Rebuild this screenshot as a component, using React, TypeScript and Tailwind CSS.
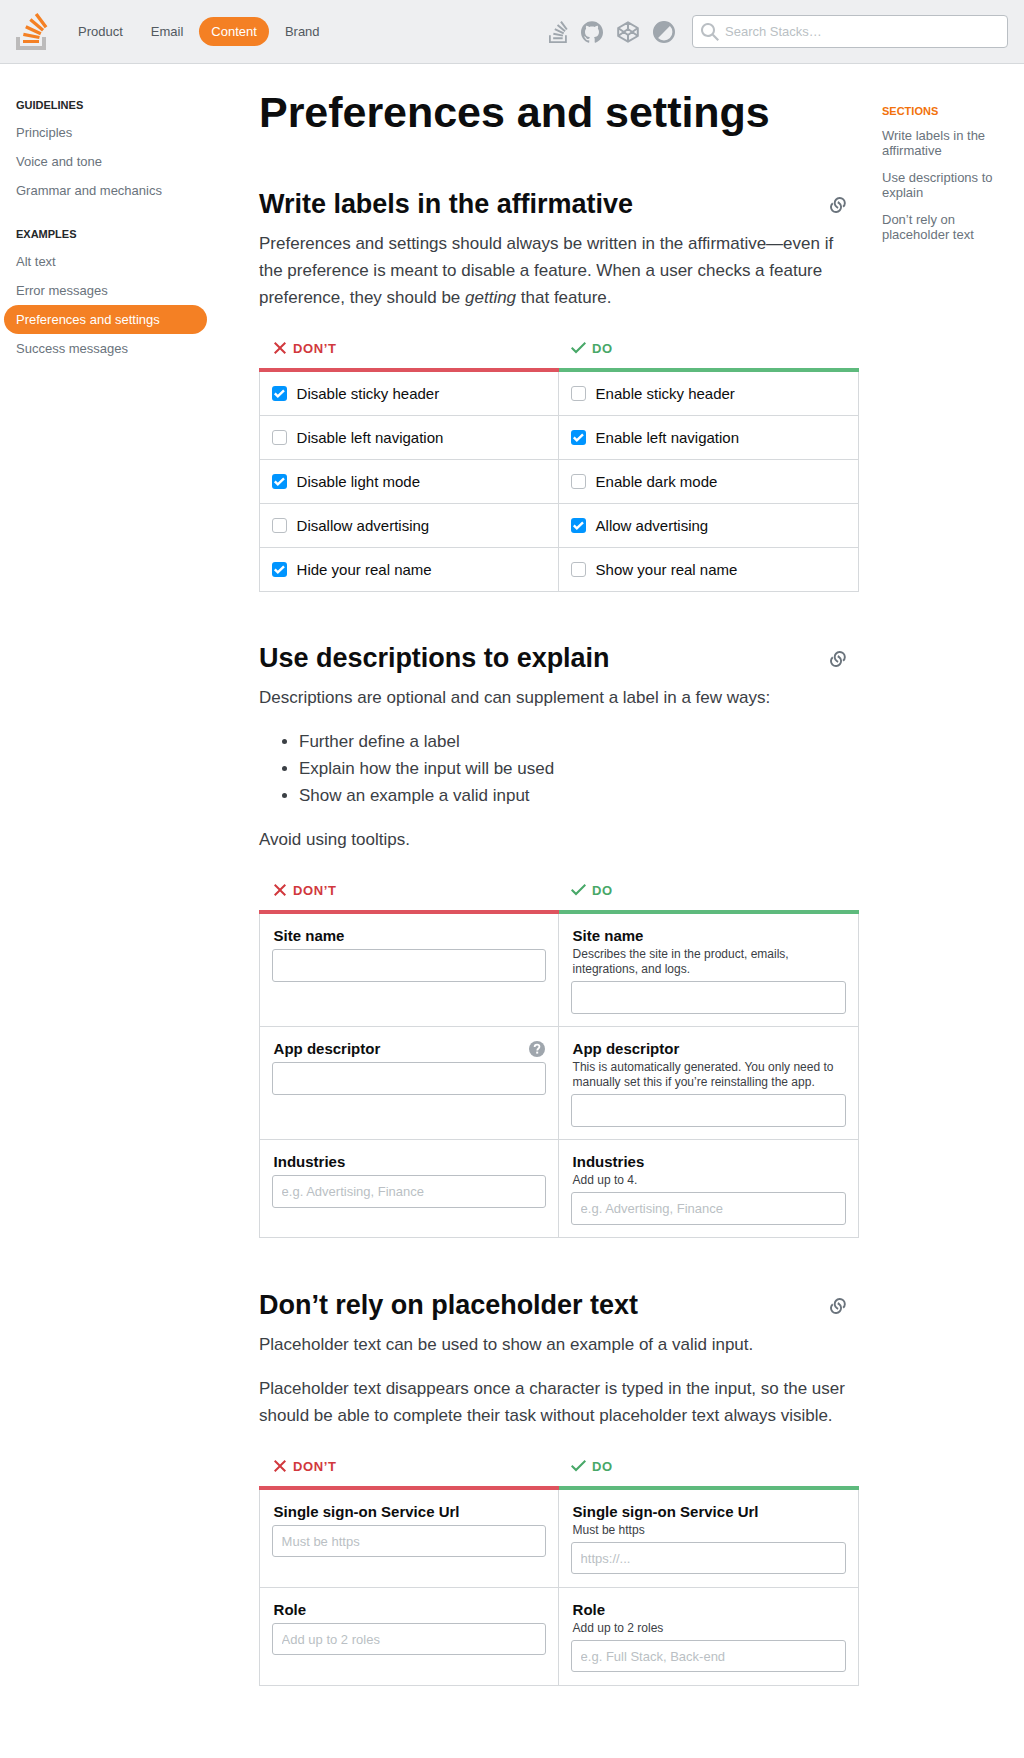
import React from "react";
import { SiGithub } from "react-icons/si";

const navLinks = ["Product", "Email", "Content", "Brand"];
const sideGroups = [
  { title: "Guidelines", items: ["Principles", "Voice and tone", "Grammar and mechanics"] },
  { title: "Examples", items: ["Alt text", "Error messages", "Preferences and settings", "Success messages"] },
];

function LinkIcon() {
  return (
    <svg width="18" height="18" viewBox="0 0 18 18" fill="currentColor">
      <path d="M7.22 11.83a6 6 0 0 0 1.62.85l.61-1.8a4.1 4.1 0 1 1 4.04-.8l1.26 1.42a6 6 0 1 0-7.53.33Zm3.43-5.6a6 6 0 0 0-1.6-.87L8.4 7.15a4.1 4.1 0 1 1-4.05.73L3.12 6.43a6 6 0 1 0 7.53-.2Z" />
    </svg>
  );
}

function CrossIcon() {
  return (
    <svg width="18" height="18" viewBox="0 0 18 18" fill="currentColor">
      <path d="M15 4.41 13.59 3 9 7.59 4.41 3 3 4.41 7.59 9 3 13.59 4.41 15 9 10.41 13.59 15 15 13.59 10.41 9 15 4.41Z" />
    </svg>
  );
}

function CheckIcon() {
  return (
    <svg width="18" height="18" viewBox="0 0 18 18" fill="currentColor">
      <path d="M16 4.41 14.59 3 6 11.59 2.41 8 1 9.41l5 5 10-10Z" />
    </svg>
  );
}

function Compare({ children }: { children: React.ReactNode }) {
  return (
    <div className="w-[600px] text-[15px] leading-[20px] text-[#0c0d0e]">
      <div className="grid grid-cols-2 text-[13px] font-bold leading-[17px] tracking-[0.65px]">
        <div className="flex h-[44px] items-center gap-1 border-b-4 border-[#de535e] pl-3 text-[#d1383d]">
          <CrossIcon />
          <span>DON’T</span>
        </div>
        <div className="flex h-[44px] items-center gap-1 border-b-4 border-[#5eba7d] pl-[11px] text-[#48a868]">
          <CheckIcon />
          <span>DO</span>
        </div>
      </div>
      {children}
    </div>
  );
}

function Row({ left, right }: { left: React.ReactNode; right: React.ReactNode }) {
  return (
    <div className="grid grid-cols-2 border-b border-[#d6d9dc]">
      <div className="border-x border-[#d6d9dc] p-3">{left}</div>
      <div className="border-r border-[#d6d9dc] p-3">{right}</div>
    </div>
  );
}

function Check({ label, on }: { label: string; on: boolean }) {
  return (
    <div className="flex h-[19px] items-center">
      {on ? (
        <span className="size-[15px] rounded-[3px] bg-[#0095ff] text-white">
          <svg width="15" height="15" viewBox="0 0 15 15" fill="none" stroke="currentColor" strokeWidth="2.4">
            <path d="M2.8 7.4 5.8 10.4 12 4.3" />
          </svg>
        </span>
      ) : (
        <span className="size-[15px] rounded-[3px] border border-[#babfc4] bg-white" />
      )}
      <span className="ml-[9.6px]">{label}</span>
    </div>
  );
}

type FieldProps = { label: string; desc?: string; placeholder?: string; help?: boolean; compact?: boolean };

function Field({ label, desc, placeholder, help, compact }: FieldProps) {
  return (
    <div>
      <div className="flex h-[20px] items-center justify-between px-[1.6px] font-bold">
        <span>{label}</span>
        {help && (
          <svg className="-mr-[2px]" width="18" height="18" viewBox="0 0 18 18">
            <circle cx="9" cy="9" r="8" fill="#9fa6ad" />
            <path
              d="M6.6 7.1C6.6 5.5 7.6 4.7 9.05 4.7c1.4 0 2.4.8 2.4 2.1 0 1.7-2.2 1.7-2.2 3.6"
              fill="none"
              stroke="#fff"
              strokeWidth="1.8"
            />
            <path d="M8.2 11.6h2v2h-2z" fill="#fff" />
          </svg>
        )}
      </div>
      {desc && <p className="mt-[1px] mb-[4px] px-[1.6px] text-[12px] leading-[15px] text-[#3b4045]">{desc}</p>}
      <input
        className={
          (desc ? "" : "mt-[3px] ") +
          (compact ? "mb-[1px] h-[32px] " : "h-[33px] ") +
          "block w-full rounded-[3px] border border-[#babfc4] bg-white px-[8.6px] text-[13px] outline-none placeholder:text-[#babfc4]"
        }
        placeholder={placeholder}
      />
    </div>
  );
}

function Heading({ children }: { children: React.ReactNode }) {
  return (
    <div className="flex h-[35px] w-[600px] items-center justify-between pr-3">
      <h2 className="text-[27px] font-bold leading-[35px] tracking-[-0.02px] text-[#0c0d0e]">{children}</h2>
      <span className="pt-[1px] text-[#6a737c]">
        <LinkIcon />
      </span>
    </div>
  );
}

export default function App() {
  return (
    <div className="h-[1758px] w-[1024px] overflow-hidden bg-white font-['Liberation_Sans',Arial,sans-serif] text-[13px] leading-[17px] text-[#3b4045]">
      <header className="flex h-[64px] items-center border-b border-[#d6d9dc] bg-[#eeeff1] pr-4 pl-4">
        <svg className="mr-[18px]" width="32" height="37" viewBox="0 0 32 37">
          <path d="M26 33v-9h4v13H0V24h4v9h22Z" fill="#BCBBBB" />
          <path
            d="m21.5 0-2.7 2 9.9 13.3 2.7-2L21.5 0ZM26 18.4 13.3 7.8l2.1-2.5 12.7 10.6-2.1 2.5ZM9.1 15.2l15 7 1.4-3-15-7-1.4 3Zm14 10.79.68-2.95-16.1-3.35L7 23l16.1 2.99ZM23 30H7v-3h16v3Z"
            fill="#F48024"
          />
        </svg>
        <nav className="flex gap-1">
          {navLinks.map((l) => (
            <a
              key={l}
              className={
                l === "Content"
                  ? "rounded-full bg-[#f48024] px-3 py-[6px] text-white"
                  : "px-3 py-[6px] text-[#525960]"
              }
            >
              {l}
            </a>
          ))}
        </nav>
        <div className="ml-auto flex items-center gap-[14px] text-[#9fa6ad]">
          <svg className="-mr-[1px]" width="19" height="22" viewBox="0 0 32 37" preserveAspectRatio="none" fill="currentColor">
            <path d="M27 34v-10h3v13H0V24h3v10h24Z" />
            <path d="m21.5 0-2.7 2 9.9 13.3 2.7-2L21.5 0ZM26 18.4 13.3 7.8l2.1-2.5 12.7 10.6-2.1 2.5ZM9.1 15.2l15 7 1.4-3-15-7-1.4 3Zm14 10.79.68-2.95-16.1-3.35L7 23l16.1 2.99ZM23 30.5H7v-3h16v3Z" />
          </svg>
          <SiGithub size={22} />
          <svg width="22" height="22" viewBox="0 0 22 22" fill="none" stroke="currentColor" strokeWidth="2" strokeLinejoin="round">
            <path d="M11 1.3 20.8 7v8L11 20.7 1.2 15V7ZM11 1.3V8M11 14v6.7M1.2 7 11 14l9.8-7M1.2 15 11 8l9.8 7" />
          </svg>
          <svg width="22" height="22" viewBox="0 0 22 22">
            <circle cx="11" cy="11" r="9.7" fill="none" stroke="currentColor" strokeWidth="2.6" />
            <path d="M18.4 3.6A10.4 10.4 0 1 0 3.6 18.4Z" fill="currentColor" />
          </svg>
        </div>
        <div className="ml-[17px] flex h-[33px] w-[316px] items-center rounded-[4px] border border-[#babfc4] bg-white pl-2">
          <svg width="18" height="18" viewBox="0 0 18 18" fill="#babfc4">
            <path d="m18 16.5-5.14-5.18h-.35a7 7 0 1 0-1.19 1.19v.35L16.5 18l1.5-1.5ZM12 7A5 5 0 1 1 2 7a5 5 0 0 1 10 0Z" />
          </svg>
          <span className="ml-[6px] text-[#babfc4]">Search Stacks…</span>
        </div>
      </header>

      <div className="flex">
        <aside className="w-[259px] shrink-0 pt-[32px] text-[#6a737c]">
          {sideGroups.map((g) => (
            <div key={g.title} className="mb-[20px] w-[207px] pl-1">
              <h3 className="h-[22px] px-3 text-[11px] font-bold uppercase leading-[18px] text-[#242729]">{g.title}</h3>
              {g.items.map((i) => (
                <a
                  key={i}
                  className={
                    i === "Preferences and settings"
                      ? "block rounded-full bg-[#f48024] px-3 py-[6px] text-white"
                      : "block px-3 py-[6px]"
                  }
                >
                  {i}
                </a>
              ))}
            </div>
          ))}
        </aside>

        <main className="w-[600px] shrink-0 text-[17px] leading-[27px]">
          <h1 className="mt-[20px] h-[56px] text-[43px] font-bold leading-[56px] tracking-[-0.03px] text-[#0c0d0e]">
            Preferences and settings
          </h1>

          <div className="mt-[47px]">
            <Heading>Write labels in the affirmative</Heading>
            <p className="mt-[8px] mb-[17px] w-[590px]">
              Preferences and settings should always be written in the affirmative—even if the preference is meant to
              disable a feature. When a user checks a feature preference, they should be <em>getting</em> that feature.
            </p>
            <Compare>
              <Row left={<Check label="Disable sticky header" on />} right={<Check label="Enable sticky header" on={false} />} />
              <Row left={<Check label="Disable left navigation" on={false} />} right={<Check label="Enable left navigation" on />} />
              <Row left={<Check label="Disable light mode" on />} right={<Check label="Enable dark mode" on={false} />} />
              <Row left={<Check label="Disallow advertising" on={false} />} right={<Check label="Allow advertising" on />} />
              <Row left={<Check label="Hide your real name" on />} right={<Check label="Show your real name" on={false} />} />
            </Compare>
          </div>

          <div className="mt-[49px]">
            <Heading>Use descriptions to explain</Heading>
            <p className="mt-[8px]">Descriptions are optional and can supplement a label in a few ways:</p>
            <ul className="mt-[17px] list-disc pl-[40px]">
              <li>Further define a label</li>
              <li>Explain how the input will be used</li>
              <li>Show an example a valid input</li>
            </ul>
            <p className="mt-[17px] mb-[17px]">Avoid using tooltips.</p>
            <Compare>
              <Row
                left={<Field label="Site name" />}
                right={<Field label="Site name" desc="Describes the site in the product, emails, integrations, and logs." />}
              />
              <Row
                left={<Field label="App descriptor" help />}
                right={
                  <Field
                    label="App descriptor"
                    desc="This is automatically generated. You only need to manually set this if you’re reinstalling the app."
                  />
                }
              />
              <Row
                left={<Field label="Industries" placeholder="e.g. Advertising, Finance" />}
                right={<Field label="Industries" desc="Add up to 4." placeholder="e.g. Advertising, Finance" />}
              />
            </Compare>
          </div>

          <div className="mt-[50px]">
            <Heading>Don’t rely on placeholder text</Heading>
            <p className="mt-[8px]">Placeholder text can be used to show an example of a valid input.</p>
            <p className="mt-[17px] mb-[17px]">
              Placeholder text disappears once a character is typed in the input, so the user should be able to complete
              their task without placeholder text always visible.
            </p>
            <Compare>
              <Row
                left={<Field compact label="Single sign-on Service Url" placeholder="Must be https" />}
                right={<Field compact label="Single sign-on Service Url" desc="Must be https" placeholder="https://..." />}
              />
              <Row
                left={<Field compact label="Role" placeholder="Add up to 2 roles" />}
                right={<Field compact label="Role" desc="Add up to 2 roles" placeholder="e.g. Full Stack, Back-end" />}
              />
            </Compare>
          </div>
        </main>

        <aside className="ml-[23px] w-[126px] pt-[40px] leading-[15px] text-[#6a737c]">
          <h3 className="text-[11px] font-bold text-[#f2720c]">SECTIONS</h3>
          <a className="mt-[9px] block">Write labels in the affirmative</a>
          <a className="mt-[12px] block">Use descriptions to explain</a>
          <a className="mt-[12px] block">Don’t rely on placeholder text</a>
        </aside>
      </div>
    </div>
  );
}
